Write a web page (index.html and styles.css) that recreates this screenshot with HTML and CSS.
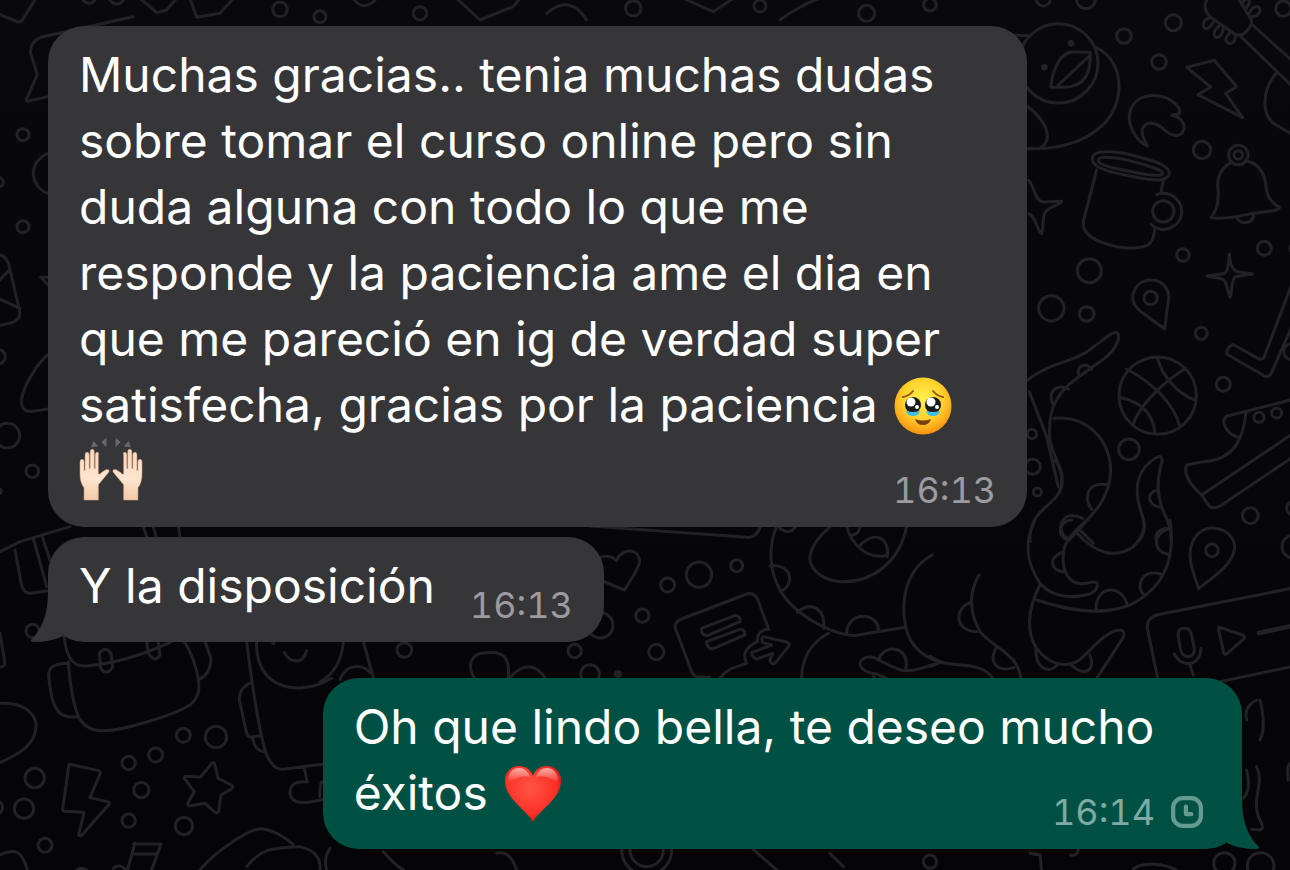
FILE: index.html
```html
<!doctype html>
<html lang="es">
<head>
    <meta charset="UTF-8">
    <meta name="viewport" content="width=device-width, initial-scale=1.0">
    <title>Chat</title>
    <link rel="stylesheet" href="styles.css">
</head>
<body>
    <!-- wallpaper -->
    <svg class="wallpaper" viewBox="0 0 1290 870" preserveAspectRatio="xMidYMid slice" aria-hidden="true">
        <!-- top edge -->
        <g transform="scale(.3333)">
            <path d="M-5 42L55 66Q65 66 70 55L108 -5M145 290L82 304Q76 302 82 292L112 224L92 160Q88 128 122 112L400 50M145 460C75 490 95 565 145 580"/>
            <circle cx="69" cy="404" r="18"/><circle cx="-4" cy="547" r="14"/><circle cx="69" cy="680" r="18"/>
            <path d="M-5 765Q20 765 28 800L58 930Q64 960 35 968L-5 978M-5 895L60 925M-5 845L28 810M145 855L122 832L150 832"/>
            <circle cx="-5" cy="1070" r="21"/><circle cx="22" cy="1307" r="37"/><circle cx="97" cy="1414" r="19"/><circle cx="-4" cy="1474" r="8"/>
            <path d="M148 1060C110 1090 70 1160 64 1200Q64 1240 100 1234L150 1226"/>
            <circle cx="267" cy="-10" r="20"/><circle cx="350" cy="-10" r="22"/>
            <path d="M420 -5L470 38L500 30L530 -5M570 -5L590 52L660 40L700 -5M1060 -5Q1090 40 1130 -5M1370 -5L1440 60L1540 20L1560 -5M1640 40Q1710 -20 1760 60M2050 -5L2140 35L2200 -5M2340 60Q2410 10 2460 -5"/>
            <circle cx="840" cy="28" r="22"/><circle cx="960" cy="50" r="18"/><circle cx="1260" cy="40" r="20"/><circle cx="1900" cy="25" r="23"/><circle cx="2280" cy="18" r="18"/><circle cx="2600" cy="40" r="24"/><circle cx="2790" cy="14" r="19"/>
        </g>
        <!-- duck, mug, bell -->
        <g transform="translate(1010 0) scale(.3333)">
            <circle cx="100" cy="-3" r="21"/><circle cx="228" cy="-2" r="28"/><circle cx="490" cy="68" r="24"/><circle cx="342" cy="108" r="22"/><circle cx="447" cy="186" r="22"/><circle cx="820" cy="26" r="23"/><circle cx="576" cy="450" r="26"/><circle cx="519" cy="765" r="19"/><circle cx="763" cy="745" r="21"/><circle cx="238" cy="812" r="36"/><circle cx="860" cy="745" r="20"/>
            <circle cx="145" cy="190" r="119"/>
            <circle class="dot" cx="183" cy="130" r="10"/><circle class="dot" cx="103" cy="202" r="10"/>
            <path d="M0 105L60 107M258 142C310 165 335 225 325 285C310 380 210 450 55 446M50 318C90 345 115 385 112 415Q105 440 85 447"/>
            <path d="M122 262C130 190 160 155 190 156L240 157C245 215 225 262 160 262ZM145 255L238 168"/>
            <path d="M412 438C380 425 355 380 358 345C365 300 400 285 440 287C485 290 515 325 509 341L485 346C515 350 525 375 522 388C512 415 490 410 470 395C445 372 425 365 410 372C388 385 395 405 412 438Z"/>
            <path d="M530 202L613 181L680 260L647 280L698 353L564 284L603 261Z"/>
            <path d="M590 0C580 20 585 35 600 50L675 103Q695 110 708 95Q728 75 724 60L685 -5M603 52C585 55 575 70 582 82C590 92 602 82 611 65M630 75C605 95 610 115 625 112Q638 105 640 85M660 98C638 120 650 132 664 130Q677 125 676 105M695 10Q715 -15 718 5Q716 20 706 26M716 40C735 10 752 18 750 33Q745 50 724 50M728 75L850 185M693 110L850 262M800 218C755 270 755 340 790 370L850 405"/>
            <path d="M248 470C255 450 320 450 400 475C460 490 480 505 478 522C470 545 440 545 360 528C280 512 240 500 248 470ZM265 478C275 465 340 475 390 490C440 505 462 515 458 522C450 532 400 523 340 510C285 500 260 490 265 478ZM260 510L220 665C215 705 265 728 320 740C370 750 405 742 420 730Q432 715 434 688M460 540L453 577"/>
            <path d="M440 584C475 570 515 595 515 635C515 680 460 705 424 674"/><circle cx="460" cy="634" r="32"/>
            <circle cx="685" cy="465" r="29"/><circle cx="685" cy="465" r="13"/>
            <path d="M665 487C635 500 620 530 624 565C628 605 618 635 603 653Q640 660 725 641L795 631Q810 628 808 622C775 600 770 585 767 550C760 510 740 487 705 482"/>
            <path d="M680 652C690 675 730 675 732 640"/>
            <path d="M55 540C72 555 75 605 100 606L155 604Q155 610 120 624C90 640 105 670 95 700C85 705 80 650 57 642"/>
        </g>
        <!-- pin, ball, boot, tentacles -->
        <g transform="translate(1010 260) scale(.3333)">
            <circle cx="124" cy="145" r="38"/><circle cx="230" cy="162" r="22"/><circle cx="574" cy="220" r="18"/><circle cx="640" cy="373" r="21"/><circle cx="357" cy="568" r="31"/><circle cx="721" cy="767" r="24"/><circle cx="747" cy="472" r="15"/><circle cx="800" cy="459" r="15"/><circle cx="66" cy="522" r="14"/><circle cx="68" cy="620" r="23"/><circle cx="82" cy="696" r="12"/><circle cx="845" cy="275" r="24"/><circle cx="850" cy="745" r="20"/>
            <path d="M464 207L400 160C370 140 365 120 370 100C380 65 410 58 435 61C465 68 478 95 476 115Z"/><circle cx="422" cy="114" r="20"/>
            <path d="M658 -18C655 30 650 42 635 42L592 47C600 55 635 48 646 65L660 112C668 100 660 65 676 50L728 42C720 38 685 40 676 32Q660 20 658 -18Z"/>
            <path d="M850 60L762 292Q758 300 745 296L672 255Q662 252 652 270Q646 280 655 285L765 349Q777 353 784 340L850 190"/>
            <circle cx="443" cy="407" r="116"/>
            <path d="M443 295C455 345 500 400 555 420M350 327C430 370 490 430 508 495M527 325C455 370 390 435 370 492M328 412C390 425 430 460 435 520"/>
            <path d="M50 362C130 300 190 310 245 265C280 240 315 205 325 222C330 245 310 275 280 298L205 352C150 390 110 440 120 540C135 610 165 625 155 680C145 720 105 735 80 770Q58 800 60 845M58 395L110 530L145 680M132 475C230 465 300 540 302 630C300 710 260 750 210 805L180 838M210 810L250 850"/>
            <path d="M207 345C195 315 235 305 245 328M130 435C110 395 140 370 175 387M135 600Q165 640 150 690M297 676C230 660 220 715 245 748M218 775C165 750 140 790 160 825Q170 835 180 838"/>
            <path d="M390 838C415 800 400 780 390 745C370 680 385 625 440 592Q455 585 457 600C440 660 440 700 460 755Q485 800 482 838M442 690C405 700 415 740 455 742M438 838C435 820 450 805 475 805"/>
        </g>
        <g transform="translate(1010 260) scale(.3333)">
            <path d="M850 418L650 469Q640 475 642 490Q650 520 682 531M708 458C700 540 670 600 580 605L530 615Q515 650 575 705L595 735Q607 750 630 738L850 590M575 705L850 520"/>
        </g>
        <!-- centre, under the big bubble -->
        <g transform="translate(590 520) scale(.3333)">
            <path d="M0 18L470 52Q500 55 512 18"/>
            <path d="M30 112Q60 102 80 122C95 85 145 80 149 125C145 150 120 180 104 210L30 180"/>
            <circle cx="233" cy="195" r="21"/><circle cx="327" cy="164" r="38"/><circle cx="440" cy="137" r="18"/><circle cx="157" cy="287" r="20"/><circle cx="31" cy="316" r="38"/><circle cx="199" cy="396" r="23"/><circle cx="0" cy="462" r="28"/><circle class="dot" cx="84" cy="462" r="12"/>
            <path d="M360 472L320 470Q310 468 305 455L256 325Q252 305 275 297L470 222Q490 217 502 235L536 328C520 325 500 340 502 365C470 380 455 400 470 430L425 445Q405 455 390 475"/>
            <path d="M335 325L435 286Q452 288 450 305L352 347Q332 345 335 325ZM350 365L450 328Q467 330 465 345L368 387Q350 385 350 365Z"/>
            <path d="M520 350L590 366Q602 370 595 380L555 430Q543 435 540 420L548 400L500 417Q485 410 485 398L545 375L518 368Q512 355 520 350Z"/>
            <path d="M560 18C530 90 535 190 610 260C680 325 770 350 800 346L945 322M950 18C930 130 840 190 750 185C690 180 650 140 662 100Q670 65 720 20M770 18C785 80 840 120 890 106M565 20Q595 50 617 20M780 45Q805 48 810 20M807 80C850 30 900 50 892 110M540 137C610 130 615 200 570 214M622 276C670 240 705 270 702 325M770 342C770 270 870 275 865 335"/>
            <path d="M1027 105C950 145 930 240 947 320C960 380 1000 420 1080 432M715 340C660 370 635 420 635 475M1040 430C980 450 950 460 920 445C870 430 860 405 830 412C800 420 800 455 860 462L890 475M868 415C885 370 960 380 948 445M850 470L860 480"/>
        </g>
        <!-- voice note -->
        <g transform="translate(930 520) scale(.3333)">
            <path d="M315 0C280 70 290 130 330 190C370 235 430 235 480 222Q505 210 502 190Q495 182 470 190C415 200 395 150 400 100C405 55 440 30 470 0M440 38C500 105 560 115 610 80Q650 40 640 0M720 0C740 130 690 210 600 255C510 290 410 270 320 240M330 195C290 270 290 340 320 385C370 450 430 440 460 410C490 380 530 335 565 330Q590 330 578 355L500 475"/>
            <path d="M425 0C385 5 380 45 410 58M400 97C360 105 355 150 400 155M718 27C670 35 665 95 715 103M692 162C635 145 615 200 642 225M498 270C495 195 580 190 592 258M318 385C315 440 350 465 382 435M425 435C450 465 500 465 480 405"/>
            <path d="M147 165C115 220 120 280 150 335C190 385 265 400 272 475M122 247C70 265 75 335 140 335M200 380C170 435 210 455 252 443M0 408C40 440 80 430 130 440Q175 450 188 475M0 440L30 428"/>
            <path d="M806 206C790 160 775 120 782 85C790 45 820 20 855 25C900 30 920 65 912 95C900 140 850 170 806 206Z"/><circle cx="846" cy="91" r="19"/><circle cx="1090" cy="80" r="34"/>
            <path d="M1085 205L690 283Q650 290 652 325L683 475M870 485L1085 440M745 350Q742 325 762 325Q782 325 785 345L793 385Q795 407 775 410Q757 410 752 390ZM733 402C755 445 810 440 813 385M780 435L790 465M870 322Q865 320 866 330L882 400Q885 407 892 400L943 355Q945 348 938 345Z"/>
            <path class="thick" d="M987 339L1085 318"/>
        </g>
        <!-- bags, bolt, star -->
        <g transform="translate(0 620) scale(.3333)">
            <path d="M0 40L14 125Q16 140 0 142M0 250C80 245 110 290 108 320C105 375 60 400 0 428"/>
            <circle cx="98" cy="33" r="20"/>
            <path d="M192 50C200 110 215 140 260 138C350 130 440 100 515 65M205 125C210 200 220 250 235 290C260 335 300 340 370 325C450 305 530 280 570 255Q600 230 597 190C590 140 570 90 550 60M205 130Q145 130 146 165C150 210 155 255 180 280Q200 295 230 290M615 65L633 115Q630 165 598 177M298 100Q315 75 333 100L338 140Q320 170 302 145ZM440 65L445 100Q465 130 480 105L475 65"/>
            <path d="M740 65C755 190 780 350 800 405Q820 450 850 448L1000 428M770 60C765 145 810 205 900 204Q950 202 995 175M853 98C870 130 910 135 920 92M755 188Q718 200 718 240L740 340Q745 355 760 350L785 347M757 352Q765 395 795 395M912 440L922 486Q870 480 870 520Q875 555 930 546L990 535M965 485Q958 500 960 530"/><circle class="dot" cx="820" cy="70" r="6"/>
            <circle cx="550" cy="346" r="21"/><circle cx="648" cy="351" r="32"/><circle cx="467" cy="405" r="21"/><circle cx="386" cy="429" r="20"/><circle cx="424" cy="510" r="23"/><circle cx="386" cy="602" r="20"/><circle cx="552" cy="618" r="26"/><circle cx="104" cy="474" r="29"/><circle cx="72" cy="566" r="29"/><circle cx="-12" cy="562" r="20"/><circle cx="135" cy="676" r="21"/>
            <path d="M210 433Q206 432 206 440L188 568Q188 574 194 574L252 577L236 645Q240 652 248 643L328 552Q330 546 322 545L270 533L301 460Q302 454 295 452Z"/>
            <path d="M636 430Q643 425 645 435L654 475L695 495Q702 502 694 507L663 525L656 575Q650 582 645 577L615 550L568 558Q560 556 564 548L583 515L553 475Q552 468 560 469L602 471Z"/>
            <path d="M0 705C45 685 65 690 82 750M400 672L483 672L455 750M405 670L382 750M397 702L470 702M340 745Q355 730 378 748M600 750C650 690 750 625 785 626Q830 630 880 674M740 740C780 690 810 682 900 680Q965 695 960 750M990 685Q970 715 980 750M230 750Q245 740 260 750"/>
        </g>
        <!-- strip between the bubbles -->
        <g transform="translate(320 636) scale(.3333)">
            <circle cx="253" cy="42" r="22"/><circle cx="764" cy="45" r="20"/>
            <path d="M70 18C65 80 40 115 0 138M130 18L160 125M60 130C80 80 130 85 150 110M465 130C440 90 450 50 500 50C550 45 570 65 565 125M570 125Q630 60 675 125"/>
        </g>
        <!-- left edge beside the second bubble -->
        <g transform="translate(20 520) scale(.3333)">
            <path d="M-60 95L0 65L150 20M0 170Q5 220 30 220L80 213M0 170L-15 90M40 55L80 200M65 45L90 120M370 20L380 50M400 20L408 50M475 20L480 50"/>
        </g>
        <!-- bottom and right edges -->
        <g transform="translate(1030 770) scale(.3333)">
            <path d="M650 0Q665 60 640 85M680 -10C705 40 660 90 690 150Q705 175 690 180L665 178M310 296C340 275 400 280 440 300M0 250L30 255L35 300M122 255Q140 260 145 240M775 30Q768 -20 785 -20"/>
            <circle cx="583" cy="280" r="32"/><circle cx="692" cy="288" r="40"/>
            <path d="M690 -210Q710 -130 690 -90M680 -210Q640 -190 650 -150M-600 250L-560 290M-830 238Q-800 265 -760 300M-1600 250Q-1560 240 -1540 300M-1940 245Q-1900 290 -1880 300"/>
            <circle cx="-1150" cy="240" r="50"/><circle cx="-1150" cy="240" r="75"/><circle cx="-300" cy="275" r="20"/>
        </g>
    </svg>

    <main class="chat">
        <div class="bubble">
            <p class="text">Muchas gracias.. tenia muchas dudas sobre tomar el curso online pero sin duda alguna con todo lo que me responde y la paciencia ame el dia en que me pareció en ig de verdad super satisfecha, gracias por la paciencia
                <svg class="emoji" viewBox="0 0 60 60" role="img" aria-label="🥹">
                    <defs>
                        <radialGradient id="face" cx=".5" cy=".38" r=".65">
                            <stop offset="0" stop-color="#fff04a"/>
                            <stop offset=".55" stop-color="#ffd12c"/>
                            <stop offset="1" stop-color="#f78a0c"/>
                        </radialGradient>
                    </defs>
                    <circle cx="30" cy="30" r="28.5" fill="url(#face)"/>
                    <ellipse cx="20" cy="29" rx="8" ry="8" fill="#171b20"/>
                    <ellipse cx="40" cy="29" rx="8" ry="8" fill="#171b20"/>
                    <path d="M13 35q7 2 14 0-1 5-7 5t-7-5zM33 35q7 2 14 0-1 5-7 5t-7-5z" fill="#42bce9"/>
                    <circle cx="18" cy="26" r="4.5" fill="#fff"/><circle cx="38" cy="26" r="4.5" fill="#fff"/>
                    <circle cx="24" cy="31" r="2" fill="#fff"/><circle cx="44" cy="31" r="2" fill="#fff"/>
                    <path d="M10 21q6-1 10-6M50 21q-6-1-10-6" fill="none" stroke="#9a5410" stroke-width="2" stroke-linecap="round"/>
                    <path d="M22 43q8 3 16 0-2 6-8 6t-8-6z" fill="#74400d"/>
                </svg>
                <svg class="emoji hands" viewBox="1 0 63 63" role="img" aria-label="🙌🏻">
                    <defs>
                        <linearGradient id="skin" x2="0" y2="1">
                            <stop offset="0" stop-color="#fbd9bd"/>
                            <stop offset=".6" stop-color="#fde4cf"/>
                            <stop offset="1" stop-color="#f3c8a8"/>
                        </linearGradient>
                        <path id="hand" d="M6 61V49Q2 44 2 35V24Q2 21 4 21T6 24V32H7V17Q7 14 9 14T11 17V30H12V14Q12 11 14 11T16 14V30H17V17Q17 14 19 14T20 17V35Q21 37 23 34L28 31Q32 31 30 34L20 46V61Z"/>
                    </defs>
                    <g fill="url(#skin)" stroke="#e3ae8c" stroke-width=".5">
                        <use href="#hand"/>
                        <use href="#hand" transform="matrix(-1 0 0 1 65 0)"/>
                    </g>
                    <path d="M15 3l5 5-7 1zM28 0v9l-5-5zM37 0v9l5-5zM50 3l-5 5 7 1z" fill="#68686a"/>
                </svg>
            </p>
            <span class="meta"><time>16:13</time></span>
        </div>

        <div class="bubble">
            <p class="text">Y la disposición<span class="spacer"></span></p>
            <span class="meta"><time>16:13</time></span>
            <svg class="tail" viewBox="0 0 48 50" aria-hidden="true">
                <path d="M17 0C17 24 10 38 0 48Q-1 50 3 50Q20 50 32 44L46 0Z"/>
            </svg>
        </div>

        <div class="bubble sent">
            <p class="text">Oh que lindo bella, te deseo mucho éxitos
                <svg class="emoji" viewBox="0 0 60 60" role="img" aria-label="❤️">
                    <defs>
                        <radialGradient id="heart" cx=".45" cy=".4" r=".65">
                            <stop offset="0" stop-color="#ff5545"/>
                            <stop offset=".7" stop-color="#fb3026"/>
                            <stop offset="1" stop-color="#d90f12"/>
                        </radialGradient>
                        <linearGradient id="shine" x2="0" y2="1">
                            <stop offset="0" stop-color="#fff" stop-opacity=".6"/>
                            <stop offset="1" stop-color="#fff" stop-opacity="0"/>
                        </linearGradient>
                    </defs>
                    <path d="M30 58C25 47 2 35 2 17C2 7 9 2 16 2C23 2 28 6 30 12C32 6 37 2 44 2C51 2 58 7 58 17C58 35 35 47 30 58Z" fill="url(#heart)"/>
                    <path d="M5 15C6 7 11 4 16 4Q24 4 27 13Q17 10 5 19ZM33 13Q36 4 44 4C50 4 54 8 55 15V19Q44 10 33 13Z" fill="url(#shine)"/>
                </svg>
            </p>
            <span class="meta">
                <time>16:14</time>
                <svg class="pending" viewBox="0 0 30 30" role="img" aria-label="Pendiente">
                    <rect x="2" y="2" width="26" height="26" rx="9"/>
                    <path d="M14 10v7h5"/>
                </svg>
            </span>
            <svg class="tail" viewBox="0 0 48 50" aria-hidden="true">
                <path d="M17 0C17 24 10 38 0 48Q-1 50 3 50Q20 50 32 44L46 0Z"/>
            </svg>
        </div>
    </main>
</body>
</html>
```
FILE: styles.css
```css
* {
    margin: 0;
    padding: 0;
    box-sizing: border-box;
}
body {
    min-height: 100vh;
    position: relative;
    background: linear-gradient(#09090b, #050507);
    font-family: Inter, "Liberation Sans", sans-serif;
    color: #fff;
    overflow-x: hidden;
}
.wallpaper {
    position: absolute;
    left: 0;
    top: 0;
    width: 100%;
    height: 100%;
    fill: none;
    stroke: #222224;
    stroke-width: 9;
    stroke-linecap: round;
    stroke-linejoin: round;
}
.wallpaper .dot {
    fill: #222224;
    stroke: none;
}
.wallpaper .thick {
    stroke-width: 14;
}
.chat {
    position: relative;
    display: flex;
    flex-direction: column;
    align-items: flex-start;
    padding: 26px 48px 21px;
}
.bubble {
    position: relative;
    max-width: 82%;
    padding: 16px 31px 23px;
    margin-bottom: 10px;
    border-radius: 36px;
    background-color: #363638;
}
.text {
    font-size: 48px;
    line-height: 66px;
}
.emoji {
    width: 60px;
    height: 60px;
    margin-left: 2px;
    vertical-align: -14px;
}
.hands {
    width: 64px;
    height: 64px;
    margin-left: 0;
}
.spacer {
    display: inline-block;
    width: 138px;
}
/* time sits in the corner, over the last text line */
.meta {
    position: absolute;
    right: 31px;
    bottom: 16px;
    display: flex;
    align-items: center;
    gap: 16px;
    font-size: 36px;
    line-height: 42px;
    font-variant-numeric: tabular-nums;
    color: #9b9ba1;
}
.tail {
    position: absolute;
    left: -17px;
    bottom: 0;
    width: 48px;
    height: 50px;
    fill: #363638;
}
.sent {
    align-self: flex-end;
    max-width: 77%;
    margin: 26px 0 0;
    background-color: #005144;
}
.sent .meta {
    right: 39px;
    color: #80aaa4;
}
.sent .tail {
    left: auto;
    right: -17px;
    fill: #005144;
    transform: scaleX(-1);
}
.pending {
    width: 32px;
    height: 32px;
    fill: none;
    stroke: #659a91;
    stroke-width: 4;
    stroke-linecap: round;
    stroke-linejoin: round;
}
```
